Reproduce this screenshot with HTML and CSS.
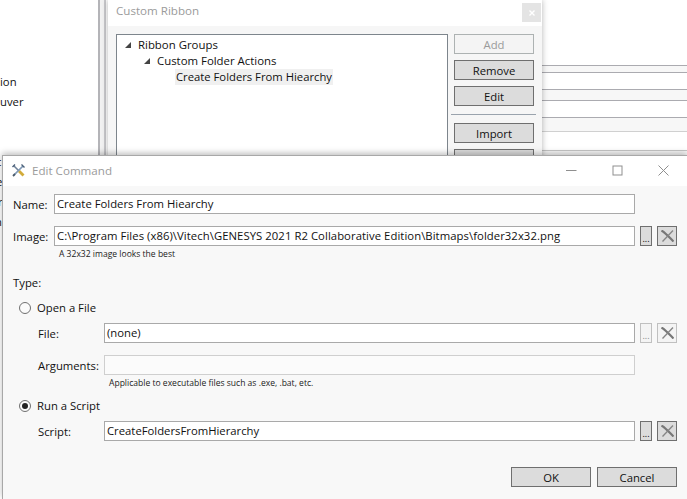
FILE: index.html
```html
<!DOCTYPE html>
<html lang="en">
<head>
<meta charset="utf-8">
<title>Edit Command</title>
<link rel="stylesheet" href="styles.css">
</head>
<body>
<div class="desktop">
  <div class="app-text app-text-1">ion</div>
  <div class="app-text app-text-2">uver</div>
  <div class="app-text app-text-3">c</div>
  <div class="app-text app-text-4">e</div>
  <div class="app-text app-text-5">r</div>
  <div class="app-text app-text-6">n</div>
  <div class="splitter"></div>
  <div class="bg-band b1"></div><div class="bg-band b2"></div><div class="bg-band b3"></div><div class="bg-band b4"></div>

  <section class="window ribbon">
    <header class="ribbon-title">
      <span class="title-text">Custom Ribbon</span>
      <span class="ribbon-close"><svg width="6" height="6" viewBox="0 0 6 6"><path d="M0.5 0.5L5.5 5.5M5.5 0.5L0.5 5.5" stroke="#fff" stroke-width="1.4"/></svg></span>
    </header>
    <div class="ribbon-body">
      <div class="tree">
        <div class="tree-row indent-0"><span class="arrow"></span><span>Ribbon Groups</span></div>
        <div class="tree-row indent-1"><span class="arrow"></span><span>Custom Folder Actions</span></div>
        <div class="tree-row indent-2"><span class="selected">Create Folders From Hiearchy</span></div>
      </div>
      <div class="ribbon-actions">
        <button class="btn btn-disabled">Add</button>
        <button class="btn">Remove</button>
        <button class="btn">Edit</button>
        <div class="sep"></div>
        <button class="btn">Import</button>
        <button class="btn">Export</button>
      </div>
    </div>
  </section>

  <section class="window dialog">
    <header class="dialog-title">
      <svg class="tools-icon" width="13" height="13" viewBox="0 0 13 13">
        <path d="M2 2L7 7" stroke="#6f8299" stroke-width="1.6"/>
        <path d="M7 7L11.5 11.5" stroke="#d2ab3a" stroke-width="2.8"/>
        <path d="M11 2L2 11" stroke="#7f98b5" stroke-width="1.7"/>
        <path d="M0.5 3L3 0.5M9.5 0.5L12.5 3.5" stroke="#4a5f78" stroke-width="1.4"/>
        <path d="M1 12L3 10" stroke="#4a5a6b" stroke-width="1.8"/>
      </svg>
      <span class="title-text">Edit Command</span>
      <div class="win-controls">
        <svg width="11" height="11" viewBox="0 0 11 11"><path d="M0 5.5H10.5" stroke="#8f8f8f"/></svg>
        <svg width="11" height="11" viewBox="0 0 11 11"><rect x="1" y="1" width="9" height="9" fill="none" stroke="#8f8f8f"/></svg>
        <svg width="11" height="11" viewBox="0 0 11 11"><path d="M0.5 0.5L10.5 10.5M10.5 0.5L0.5 10.5" stroke="#8f8f8f"/></svg>
      </div>
    </header>
    <div class="dialog-body">
      <div class="row row-name">
        <label class="label label-top">Name:</label>
        <div class="input input-strong">Create Folders From Hiearchy</div>
        <div class="spacer-actions"></div>
      </div>
      <div class="row row-image">
        <label class="label label-top">Image:</label>
        <div class="input input-strong input-path">C:\Program Files (x86)\Vitech\GENESYS 2021 R2 Collaborative Edition\Bitmaps\folder32x32.png</div>
        <button class="mini dots dark">...</button>
        <button class="mini cross dark"><svg width="13" height="12" viewBox="0 0 13 12"><path d="M0.5 0.5C4.5 3 8.5 7.5 12.5 11.5" stroke="#777" stroke-width="2.2" fill="none"/><path d="M12 0.5L1.5 11.5" stroke="#858585" stroke-width="1.3"/></svg></button>
      </div>
      <div class="hint hint-image">A 32x32 image looks the best</div>
      <div class="type-label">Type:</div>
      <div class="radio-row open-row"><span class="radio"></span><span>Open a File</span></div>
      <div class="row row-file">
        <label class="label label-sub">File:</label>
        <div class="input input-strong">(none)</div>
        <button class="mini dots light">...</button>
        <button class="mini cross light"><svg width="13" height="12" viewBox="0 0 13 12"><path d="M0.5 0.5C4.5 3 8.5 7.5 12.5 11.5" stroke="#777" stroke-width="2.2" fill="none"/><path d="M12 0.5L1.5 11.5" stroke="#858585" stroke-width="1.3"/></svg></button>
      </div>
      <div class="row row-args">
        <label class="label label-sub">Arguments:</label>
        <div class="input input-disabled"></div>
        <div class="spacer-actions"></div>
      </div>
      <div class="hint hint-args">Applicable to executable files such as .exe, .bat, etc.</div>
      <div class="radio-row run-row"><span class="radio radio-on"></span><span>Run a Script</span></div>
      <div class="row row-script">
        <label class="label label-sub">Script:</label>
        <div class="input input-strong">CreateFoldersFromHierarchy</div>
        <button class="mini dots dark">...</button>
        <button class="mini cross dark"><svg width="13" height="12" viewBox="0 0 13 12"><path d="M0.5 0.5C4.5 3 8.5 7.5 12.5 11.5" stroke="#777" stroke-width="2.2" fill="none"/><path d="M12 0.5L1.5 11.5" stroke="#858585" stroke-width="1.3"/></svg></button>
      </div>
      <div class="dialog-actions">
        <button class="btn">OK</button>
        <button class="btn">Cancel</button>
      </div>
    </div>
  </section>
</div>
</body>
</html>
```
FILE: styles.css
```css
* { box-sizing: border-box; }
html, body { margin: 0; padding: 0; }
body { width: 687px; height: 499px; overflow: hidden; background: #fff; font-family: "Open Sans", "Noto Sans", sans-serif; font-size: 11.3px; color: #111; }
.desktop { position: relative; width: 687px; height: 499px; overflow: hidden; background: #fff; }
.app-text { position: absolute; left: 0; line-height: 16px; }
.app-text-1 { top: 74px; }
.app-text-2 { top: 94px; }
.app-text-3 { top: 154px; left: -4px; }
.app-text-4 { top: 174px; left: -4px; }
.app-text-5 { top: 194px; left: -2px; }
.app-text-6 { top: 214px; left: -5px; }
.splitter { position: absolute; left: 98px; top: 0; width: 8px; height: 160px; border-left: 2px solid #b4b4b8; border-right: 2px solid #c9c9cc; background: #f2f2f2; }
.bg-band { position: absolute; left: 542px; right: 0; background: #f7f7f7; border-top: 1px solid #ababb0; border-bottom: 1px solid #ababb0; }
.b1 { top: 65px; height: 8px; }
.b2 { top: 89px; height: 12px; }
.b3 { top: 117px; height: 15px; border-bottom-color: #d0d0d0; }
.b4 { top: 150px; height: 6px; border-top-color: #c6c6c6; border-bottom: 0; }
.window { position: absolute; }
.ribbon { left: 108px; top: 0; width: 434px; height: 160px; background: #f6f6f6; box-shadow: 0 0 6px rgba(0,0,0,.3); }
.ribbon-title { height: 26px; background: #fff; display: flex; align-items: flex-start; justify-content: space-between; padding: 3px 1px 0 8px; }
.title-text { color: #9b9b9b; font-size: 11.6px; line-height: 16px; }
.ribbon-close { width: 19px; height: 19px; background: #e4e4e4; display: flex; align-items: center; justify-content: center; }
.ribbon-body { display: flex; padding: 8px 0 0 8px; gap: 6px; }
.tree { width: 332px; height: 140px; background: #fff; border: 1px solid #7d858c; padding-top: 2px; font-size: 11.4px; }
.tree-row { height: 16px; display: flex; align-items: center; line-height: 16px; white-space: nowrap; }
.indent-0 { padding-left: 8px; }
.indent-1 { padding-left: 27px; }
.indent-2 { padding-left: 58px; font-size: 11.28px; }
.arrow { width: 0; height: 0; border-left: 6px solid transparent; border-bottom: 6px solid #444; margin-right: 7px; }
.selected { background: #f0f0f0; padding: 0 1px; }
.ribbon-actions { width: 80px; display: flex; flex-direction: column; gap: 6px; }
.btn { width: 80px; height: 20px; padding: 0; background: #dcdcdc; border: 1px solid #6f6f6f; font: inherit; color: #111; }
.btn-disabled { background: #f4f4f4; border-color: #adb2b2; color: #9a9a9a; }
.sep { height: 1px; margin: 2px -2px 2px -3px; background: #9aa3ad; }
.dialog { left: 2px; top: 155px; right: 0; bottom: 0; background: #f8f8f8; border-top: 1px solid #a8a8a8; border-left: 1px solid #a8a8a8; box-shadow: 0 -2px 6px rgba(0,0,0,.25); }
.dialog-title { height: 30px; background: #fff; display: flex; align-items: flex-start; padding: 7px 0 0 9px; }
.tools-icon { margin-right: 7px; margin-top: 1px; flex: none; }
.win-controls { margin-left: auto; display: flex; gap: 35px; padding: 2px 18px 0 0; }
.dialog-body { padding: 8px 10px 0 0; display: flex; flex-direction: column; }
.row { display: flex; align-items: center; height: 20px; }
.label { flex: none; }
.label-top { width: 51px; padding-left: 10px; }
.label-sub { width: 101px; padding-left: 35px; }
.input { flex: 1; min-width: 0; height: 20px; line-height: 17px; padding-left: 2px; background: #fff; white-space: nowrap; overflow: hidden; }
.input-path { letter-spacing: 0.06px; }
.input-strong { border: 1px solid #a9a9a9; }
.input-disabled { border: 1px solid #cfcfcf; background: #fbfbfb; }
.spacer-actions { width: 42px; flex: none; }
.mini { flex: none; height: 20px; padding: 0; background: #dcdcdc; border: 1px solid #6f6f6f; font: inherit; }
.dots { width: 12px; margin-left: 5px; font-size: 9px; line-height: 24px; }
.cross { width: 20px; margin-left: 5px; display: flex; align-items: center; justify-content: center; }
.mini.light { background: #f4f4f4; border-color: #c0c0c0; color: #888; }
.row-image { margin-top: 12px; }
.hint { font-size: 8.55px; line-height: 12px; color: #222; }
.hint-image { margin-left: 56px; margin-top: 2px; }
.type-label { margin-top: 15px; margin-left: 10px; line-height: 16px; }
.radio-row { display: flex; align-items: center; gap: 6px; line-height: 16px; height: 16px; padding-left: 16px; }
.open-row { margin-top: 9px; }
.radio { width: 12px; height: 12px; flex: none; border-radius: 50%; border: 1px solid #707070; background: #fbfbfb; display: flex; align-items: center; justify-content: center; }
.radio-on::after { content: ""; width: 6px; height: 6px; border-radius: 50%; background: #222; }
.row-file { margin-top: 7px; }
.row-args { margin-top: 12px; }
.hint-args { margin-left: 106px; margin-top: 2px; }
.run-row { margin-top: 9px; }
.row-script { margin-top: 7px; }
.dialog-actions { display: flex; justify-content: flex-end; gap: 6px; margin-top: 26px; }
```
